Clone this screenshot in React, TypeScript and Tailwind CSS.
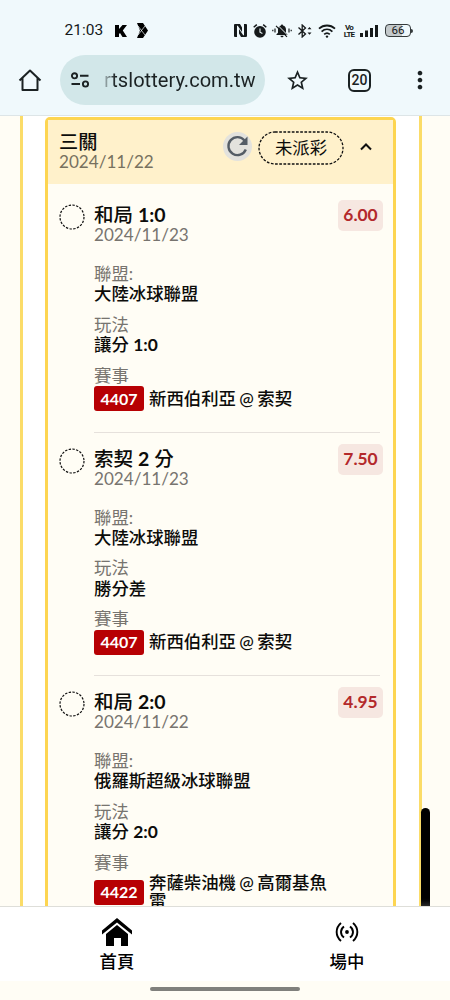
import React from 'react';
import { MdMoreVert, MdStarBorder } from 'react-icons/md';

type Bet = {
  title: string;
  date: string;
  league: string;
  play: string;
  code: string;
  match: string;
  odds: string;
};

const bets: Bet[] = [
  {
    title: '和局 1:0',
    date: '2024/11/23',
    league: '大陸冰球聯盟',
    play: '讓分 1:0',
    code: '4407',
    match: '新西伯利亞 @ 索契',
    odds: '6.00'
  },
  {
    title: '索契 2 分',
    date: '2024/11/23',
    league: '大陸冰球聯盟',
    play: '勝分差',
    code: '4407',
    match: '新西伯利亞 @ 索契',
    odds: '7.50'
  },
  {
    title: '和局 2:0',
    date: '2024/11/22',
    league: '俄羅斯超級冰球聯盟',
    play: '讓分 2:0',
    code: '4422',
    match: '奔薩柴油機 @ 高爾基魚雷',
    odds: '4.95'
  }
];

// Digits are heavier than the Chinese text around them
const Mixed: React.FC<{ text: string }> = ({ text }) => (
  <>
    {text.split(/([\d:]+)/).map((part, i) =>
      i % 2 ? (
        <span key={i} className="font-bold">
          {part}
        </span>
      ) : (
        part
      )
    )}
  </>
);

const StatusBar: React.FC = () => (
  <div className="flex h-[46px] items-center pt-[15px] pl-[64.5px] font-[Roboto] text-[#15191a]">
    <span className="w-[50.5px] text-[15.5px] leading-none">21:03</span>
    <svg className="h-3 w-[12px]" viewBox="0 0 12 12">
      <path d="M0 0h4v4L7.5 0H12L7.8 5.4 12 12H7.5L5 8l-1 1v3H0z" fill="#000" />
    </svg>
    <svg className="ml-[10px] h-[15px] w-[11px]" viewBox="0 0 11 15">
      <path d="M0 0h6l5 7.5L6 15H0l3-7.5z" fill="#000" />
      <path d="M1 3l7 9M8 3l-7 9" stroke="#f0f9fb" strokeWidth="0.7" />
    </svg>

    {/* NFC */}
    <svg className="ml-[86px] h-[13px] w-[13px]" viewBox="0 0 13 13">
      <path d="M1 0h5l2 3.5V8L3.800 1.800H3V13H1a1 1 0 0 1-1-1V1a1 1 0 0 1 1-1zM12 13H7L5 9.500V5l4.200 6.200H10V0h2a1 1 0 0 1 1 1v11a1 1 0 0 1-1 1z" fill="currentColor" />
    </svg>

    <svg className="ml-[6px] h-[14px] w-[14px]" viewBox="0 0 14 14">
      <circle cx="7" cy="7.9" r="5.8" fill="currentColor" />
      <path d="M.7 3.2L3.8.6M13.3 3.2L10.2.6" stroke="currentColor" strokeWidth="1.5" />
      <path d="M7 4.6v3.6l2.4 1.4" fill="none" stroke="#f0f9fb" strokeWidth="1.1" />
    </svg>

    {/* Muted bell */}
    <svg className="ml-[5px] h-[14px] w-[20px]" viewBox="0 0 20 14">
      <path d="M10 .5c.7 0 1 .5 1 1.1 2 .5 3 2.1 3 4.1v3l1.6 1.7v.7H4.4v-.7L6 8.7v-3c0-2 1-3.6 3-4.1C9 1 9.3.5 10 .5zM8.5 11.8h3c0 2-3 2-3 0z" fill="currentColor" />
      <path d="M5.5 1l11 11" stroke="#f0f9fb" strokeWidth="1" />
      <path d="M4 1.8l11 11M3 4.5v4M.8 5.8v1.5M17 4.5v4M19.2 5.8v1.5" stroke="currentColor" strokeWidth="1.2" />
    </svg>

    <svg className="ml-[5px] h-[14px] w-[15px]" viewBox="0 0 15 14">
      <path d="M1.5 3.5l7 6.5L5.2 13V1l3.3 3-7 6.5" fill="none" stroke="currentColor" strokeWidth="1.3" />
      <path d="M12.5 3l2 2.3h-4zM12.5 10.8l2-2.3h-4z" fill="currentColor" />
    </svg>

    <svg className="ml-[6px] h-[14px] w-[18px]" viewBox="0 0 18 14">
      <path d="M1 4.7c4.6-4.3 11.4-4.3 16 0M3.6 7.6c3.2-2.9 7.6-2.9 10.8 0M6.2 10.3c1.7-1.5 3.9-1.5 5.6 0" fill="none" stroke="currentColor" strokeWidth="1.8" />
      <circle cx="9" cy="12.6" r="1.2" fill="currentColor" />
    </svg>

    <span className="ml-[8px] flex w-[10px] flex-col items-center text-[8px] leading-[7px] font-bold tracking-[-0.8px]">
      <span>Vo</span>
      <span>LTE</span>
    </span>

    <svg className="ml-[6px] h-3 w-[18px]" viewBox="0 0 18 12">
      <path d="M0 8h3v4H0zM5 5.5h3V12H5zM10 3h3v9h-3zM15 0h3v12h-3z" fill="currentColor" />
    </svg>

    <div className="ml-[7px] flex h-[13px] w-[26px] items-center justify-center rounded-[4px] border border-[#343a3b] bg-linear-to-r from-[#c3c9cb] from-65% to-transparent to-65% text-[11.5px] leading-none">
      66
    </div>
    <div className="h-1 w-[1.5px] rounded-r bg-[#343a3b]" />
  </div>
);

const AddressBar: React.FC = () => (
  <div className="flex h-[69px] items-center pb-[1px] pl-[18px] text-[#1b2223]">
    <svg className="h-[24px] w-[24px]" viewBox="0 0 24 24">
      <path d="M1.5 12.5L12 2.5l10.5 10M4.5 10v12h15V10" fill="none" stroke="currentColor" strokeWidth="2" strokeLinejoin="round" />
    </svg>

    <div className="ml-[18px] flex h-[50px] w-[205px] items-center rounded-full bg-[#d2e7e9] pl-[10px]">
      <svg className="h-4 w-5" viewBox="0 0 20 16">
        <g fill="none" stroke="currentColor" strokeWidth="1.9">
          <circle cx="4.5" cy="3.8" r="2.6" />
          <circle cx="15.5" cy="12" r="2.6" />
          <path d="M10 3.8h8.5M1.5 12H10" />
        </g>
      </svg>
      <div className="ml-[10px] bg-linear-to-r from-[#d2e7e9] from-1% to-[#1b2223] to-[10%] bg-clip-text pl-[4px] font-[Roboto] text-[20.1px] leading-7 whitespace-nowrap text-transparent">
        rtslottery.com.tw
      </div>
    </div>

    <MdStarBorder className="ml-[20px] h-[25px] w-[25px]" />
    <div className="ml-[38px] flex h-[23px] w-[23px] items-center justify-center rounded-[6px] border-2 border-current font-[Roboto] text-[14px] leading-none font-medium">
      20
    </div>
    <MdMoreVert className="ml-[35px] h-[28px] w-[28px]" />
  </div>
);

const BetItem: React.FC<{ bet: Bet; last: boolean }> = ({ bet, last }) => (
  <div className="flex pl-[10.5px]">
    <svg className="mt-[15px] h-[26px] w-[26px] shrink-0" viewBox="0 0 26 26">
      <circle cx="13" cy="13" r="12" fill="none" stroke="#111" strokeWidth="1.2" strokeDasharray="2.4 1.37" />
    </svg>
    <div
      className={`ml-[9.5px] h-[243.5px] w-[286px] shrink-0 pt-[11px] ${last ? '' : 'border-b-[1.5px] border-[#e6e1dc]'}`}
    >
      <div className="flex h-[46px] justify-between">
        <div className="pt-[4px]">
          <p className="text-[19.5px] leading-[21px] font-medium">
            <Mixed text={bet.title} />
          </p>
          <p className="text-[17.1px] leading-[20.5px] text-[#77746f]">{bet.date}</p>
        </div>
        <div className="-mr-[3px] flex h-[31px] w-[45px] items-center justify-center rounded-[5px] bg-[#f6e7e1] text-[17.4px] font-bold text-[#b3292b]">
          {bet.odds}
        </div>
      </div>

      <p className="mt-[17px] leading-[21px] text-[#77746f]">聯盟:</p>
      <p className="leading-[20.5px] font-medium">{bet.league}</p>
      <p className="mt-[10px] leading-[20.5px] text-[#77746f]">玩法</p>
      <p className="leading-[20.5px] font-medium">
        <Mixed text={bet.play} />
      </p>
      <p className="mt-[10px] leading-[20.5px] text-[#77746f]">賽事</p>
      <div className={`flex items-center ${last ? 'pt-[1px]' : ''}`}>
        <span className="flex h-[25px] w-[50px] shrink-0 items-center justify-center rounded-[3px] bg-[#b70003] text-[16px] font-bold text-white">
          {bet.code}
        </span>
        <span className="ml-[5px] w-[184px] leading-[18px] font-medium [word-spacing:-1px]">
          {bet.match}
        </span>
      </div>
    </div>
  </div>
);

const App: React.FC = () => {
  return (
    <div className="flex h-[1000px] w-[450px] flex-col overflow-hidden bg-[#fffdf5] font-[Lato,'Noto_Sans_CJK_TC',sans-serif] text-[17.4px] text-[#0c0c0a]">
      <header className="h-[115px] shrink-0 bg-[#f0f9fc]">
        <StatusBar />
        <AddressBar />
      </header>

      <main className="relative flex h-[791px] shrink-0 overflow-hidden border-t border-[#dde5e7] pl-[20px]">
        <div className="h-full w-[402px] border-x-3 border-[#fbdc68] bg-white px-[22px] pt-[1px]">
          <section className="h-[900px] w-[351px] rounded-t-[5px] border-3 border-[#fdd551] bg-[#fffdf5]">
            <div className="flex h-[64px] bg-[#fff1cb] pl-[11px]">
              <div className="w-[164px] pt-[11px]">
                <p className="text-[19.2px] leading-[21px] font-medium">三關</p>
                <p className="text-[17.1px] leading-[20px] text-[#77715f]">2024/11/22</p>
              </div>
              <div className="mt-[12px] flex h-[29px] w-[29px] items-center justify-center rounded-full bg-[#e3e2dd]">
                <svg className="h-[23px] w-[23px]" viewBox="0 0 23 23">
                  <path d="M19.8 14.5A9 9 0 1 1 18.5 5.5" fill="none" stroke="#555d66" strokeWidth="2.4" />
                  <path d="M21.5 1.5v8.5H13z" fill="#555d66" />
                </svg>
              </div>
              <div className="relative ml-[6px] mt-[11px] flex h-[34px] w-[86px] items-center justify-center">
                <svg className="absolute inset-0 h-full w-full" viewBox="0 0 86 34">
                  <rect x="1" y="1" width="84" height="32" rx="16" fill="none" stroke="#111" strokeWidth="1.3" strokeDasharray="2.7 1.5" />
                </svg>
                <span>未派彩</span>
              </div>
              <svg className="mt-[22px] ml-[15px] h-[10px] w-[14px]" viewBox="0 0 14 10">
                <path d="M2 7.5l5-5 5 5" fill="none" stroke="#111" strokeWidth="2" />
              </svg>
            </div>

            <div className="pt-[5px]">
              {bets.map((bet, i) => (
                <BetItem key={bet.title} bet={bet} last={i === bets.length - 1} />
              ))}
            </div>
          </section>
        </div>

        {/* Scroll thumb */}
        <div className="absolute right-[20px] bottom-0 h-[98px] w-[9px] rounded-t-full bg-linear-to-b from-black from-90% to-[#292929]" />
      </main>

      <nav className="flex h-[75px] shrink-0 border-t border-[#deded9] bg-white text-black">
        <div className="ml-[57px] flex w-[120px] flex-col items-center pt-[11px]">
          <svg className="h-[28px] w-[32px]" viewBox="0 0 32 28">
            <path d="M1 12.5L16 0l15 12.5v4L16 4.5 1 16.5z" />
            <path d="M5 16L16 7l11 9v12h-7v-8h-7v8H5z" />
          </svg>
          <span className="mt-[6px] leading-[20px] font-medium">首頁</span>
        </div>
        <div className="ml-[110px] flex w-[120px] flex-col items-center pt-[15px]">
          <svg className="h-[20px] w-[24px]" viewBox="0 0 24 20">
            <g fill="none" stroke="currentColor" strokeWidth="1.9">
              <path d="M6 1C.2 6 .2 14 6 19M18 1c5.8 5 5.8 13 0 18M9 4.5c-4 3-4 8 0 11M15 4.5c4 3 4 8 0 11" />
            </g>
            <circle cx="12" cy="10" r="1.9" />
          </svg>
          <span className="mt-[10px] leading-[20px] font-medium">場中</span>
        </div>
      </nav>

      <div className="flex h-[19px] shrink-0 justify-center pt-[6px]">
        <div className="h-[4px] w-[150px] rounded-full bg-[#80807c]" />
      </div>
    </div>
  );
};

export default App;
